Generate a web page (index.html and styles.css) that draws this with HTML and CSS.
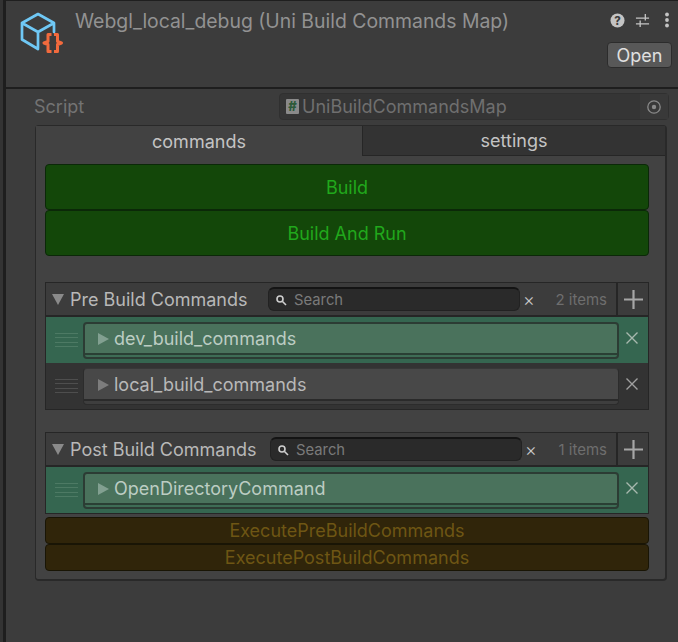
FILE: index.html
```html
<!DOCTYPE html>
<html lang="en">
<head>
  <meta charset="UTF-8">
  <title>Webgl_local_debug</title>
  <link rel="stylesheet" href="styles.css">
</head>
<body>
  <div class="side"></div>
  <div class="inspector">

    <!-- Header -->
    <header class="head">
      <svg class="logo" width="48" height="46" viewBox="0 0 48 46" fill="none">
        <path d="M20 22 L4 13 V29.500 L20 39 M20 22 L36 13 L20 4 L4 13 M36 13 V22 M20 22 V38" stroke="#6fc8f5" stroke-width="2.700" stroke-linejoin="round" stroke-linecap="round"/>
        <path d="M33.500 24.500 H30 V31.500 L26 33 L30 34.500 V41.500 H33.500 M36 24.500 H39.500 V31.500 L43.500 33 L39.500 34.500 V41.500 H36" stroke="#f26a3d" stroke-width="3" stroke-linejoin="round"/>
      </svg>
      <div class="head-title">Webgl_local_debug (Uni Build Commands Map)</div>
      <div class="head-right">
        <div class="head-icons">
          <svg width="15" height="15" viewBox="0 0 16 16"><circle cx="8" cy="8" r="7.500" fill="#c4c4c4"/><text x="8" y="12.500" class="help-mark">?</text></svg>
          <svg width="15" height="15" viewBox="0 0 16 16" stroke="#c4c4c4" stroke-width="1.400" fill="none"><path d="M1 5.500H15M1 11.500H15M11 1V8M5.500 8V15"/></svg>
          <svg class="dots" width="6" height="16" viewBox="0 0 6 16" fill="#c4c4c4"><circle cx="3" cy="2.500" r="1.900"/><circle cx="3" cy="8" r="1.900"/><circle cx="3" cy="13.500" r="1.900"/></svg>
        </div>
        <button class="open-btn">Open</button>
      </div>
    </header>

    <!-- Script -->
    <div class="script-row">
      <span class="script-label">Script</span>
      <div class="script-field">
        <span class="hash">#</span>
        <span class="script-name">UniBuildCommandsMap</span>
        <span class="picker"><svg width="16" height="16" viewBox="0 0 16 16" fill="none"><circle cx="8" cy="8" r="6.200" stroke="#8a8a8a" stroke-width="1.300"/><circle cx="8" cy="8" r="2.200" fill="#8a8a8a"/></svg></span>
      </div>
    </div>

    <!-- Panel -->
    <div class="panel">
      <div class="tabs">
        <div class="tab tab-on">commands</div>
        <div class="tab">settings</div>
      </div>
      <div class="panel-body">
        <button class="big-btn">Build</button>
        <button class="big-btn">Build And Run</button>

        <section class="list list-pre">
          <div class="list-head">
            <span class="fold"></span>
            <span class="list-title">Pre Build Commands</span>
            <div class="search"><svg width="12" height="12" viewBox="0 0 12 12" fill="none" stroke="#cfcfcf" stroke-width="1.600"><circle cx="5" cy="5" r="3"/><path d="M7.500 7.500L11 11"/></svg><span>Search</span></div>
            <span class="clear">×</span>
            <span class="count">2 items</span>
            <span class="add"><svg width="19" height="19" viewBox="0 0 19 19" stroke="#a6a6a6" stroke-width="2.200"><path d="M0 9.500H19M9.500 0V19"/></svg></span>
          </div>
          <div class="row row-on">
            <div class="grip"><i></i><i></i><i></i><i></i></div>
            <div class="item"><span class="item-arrow"></span>dev_build_commands</div>
            <svg class="del" width="12" height="12" viewBox="0 0 12 12" stroke="#a8b8ae" stroke-width="1.400"><path d="M0.500 0.500L11.500 11.500M11.500 0.500L0.500 11.500"/></svg>
          </div>
          <div class="row">
            <div class="grip"><i></i><i></i><i></i><i></i></div>
            <div class="item"><span class="item-arrow"></span>local_build_commands</div>
            <svg class="del" width="12" height="12" viewBox="0 0 12 12" stroke="#a0a0a0" stroke-width="1.400"><path d="M0.500 0.500L11.500 11.500M11.500 0.500L0.500 11.500"/></svg>
          </div>
        </section>

        <section class="list list-post">
          <div class="list-head">
            <span class="fold"></span>
            <span class="list-title">Post Build Commands</span>
            <div class="search"><svg width="12" height="12" viewBox="0 0 12 12" fill="none" stroke="#cfcfcf" stroke-width="1.600"><circle cx="5" cy="5" r="3"/><path d="M7.500 7.500L11 11"/></svg><span>Search</span></div>
            <span class="clear">×</span>
            <span class="count">1 items</span>
            <span class="add"><svg width="19" height="19" viewBox="0 0 19 19" stroke="#a6a6a6" stroke-width="2.200"><path d="M0 9.500H19M9.500 0V19"/></svg></span>
          </div>
          <div class="row row-on">
            <div class="grip"><i></i><i></i><i></i><i></i></div>
            <div class="item"><span class="item-arrow"></span>OpenDirectoryCommand</div>
            <svg class="del" width="12" height="12" viewBox="0 0 12 12" stroke="#a8b8ae" stroke-width="1.400"><path d="M0.500 0.500L11.500 11.500M11.500 0.500L0.500 11.500"/></svg>
          </div>
        </section>

        <button class="exec-btn exec-first">ExecutePreBuildCommands</button>
        <button class="exec-btn">ExecutePostBuildCommands</button>
      </div>
    </div>
  </div>
</body>
</html>
```

FILE: styles.css
```css
* {
  box-sizing: border-box;
}

html, body {
  height: 100%;
}

/* Page */
body {
  margin: 0;
  display: flex;
  background-color: #3c3c3c;
  font-family: 'Inter', 'Liberation Sans', sans-serif;
  color: #c4c4c4;
  overflow: hidden;
}

button {
  font-family: inherit;
}

.side {
  width: 6px;
  flex: none;
  background-color: #333333;
  border-right: 3px solid #1e1e1e;
}

.inspector {
  flex: 1;
  min-width: 0;
  border-top: 1px solid #1f1f1f;
}

/* Header */
.head {
  height: 88px;
  display: flex;
  align-items: flex-start;
  padding: 7px 6px 0 12px;
  border-bottom: 2px solid #1e1e1e;
}

.logo {
  flex: none;
  margin-top: 2px;
}

.head-title {
  margin-left: 9px;
  margin-top: 1px;
  font-size: 19.400px;
  color: #929292;
  white-space: nowrap;
  flex: 1;
}

.head-right {
  display: flex;
  flex-direction: column;
  align-items: flex-end;
  gap: 14px;
  margin-top: 4px;
}

.head-icons {
  display: flex;
  align-items: center;
  gap: 10px;
  padding-right: 2px;
}

.dots {
  margin-left: 4px;
}

.help-mark {
  font-size: 12px;
  font-weight: 800;
  fill: #3c3c3c;
  text-anchor: middle;
}

.open-btn {
  width: 65px;
  height: 26px;
  padding: 0;
  border: 1px solid #2c2c2c;
  border-radius: 4px;
  background-color: #585858;
  color: #e0e0e0;
  font-size: 18px;
}

/* Script row */
.script-row {
  display: flex;
  align-items: center;
  height: 27px;
  margin: 4px 9px 0 28px;
}

.script-label {
  width: 245px;
  font-size: 18px;
  color: #737373;
}

.script-field {
  flex: 1;
  height: 27px;
  display: flex;
  align-items: center;
  border: 1px solid #303030;
  border-radius: 4px;
  background-color: #353535;
  padding-left: 6px;
  color: #6f6f6f;
  font-size: 18px;
}

.hash {
  width: 13px;
  height: 15px;
  margin-right: 3px;
  background-color: #8a8a8a;
  color: #2d5a3a;
  font-size: 13px;
  font-weight: 800;
  line-height: 15px;
  text-align: center;
  border-radius: 1px;
}

.script-name {
  flex: 1;
}

.picker {
  width: 28px;
  height: 25px;
  display: flex;
  align-items: center;
  justify-content: center;
  background-color: #393939;
}

/* Panel with tabs */
.panel {
  margin: 5px 11px 0 29px;
  height: 456px;
  border: 2px solid #292929;
  border-top-width: 1px;
  border-left-width: 1px;
  border-radius: 4px;
  background-color: #424242;
}

.tabs {
  display: flex;
  height: 30px;
}

.tab {
  flex: 1;
  display: flex;
  align-items: center;
  justify-content: center;
  font-size: 18px;
  background-color: #333333;
  border-bottom: 1px solid #262626;
  border-left: 1px solid #262626;
}

.tab-on {
  flex: none;
  width: 326px;
  background-color: #424242;
  border: 0;
}

.panel-body {
  padding: 8px 16px 0 9px;
  display: flex;
  flex-direction: column;
}

.big-btn {
  height: 46px;
  padding: 0;
  border: 1px solid #0b2808;
  border-radius: 4px;
  background-color: #134709;
  color: #21a81c;
  font-size: 18px;
}

/* Lists */
.list {
  border: 1px solid #262626;
  background-color: #333333;
}

.list-pre {
  margin-top: 26px;
}

.list-post {
  margin-top: 22px;
}

.list-head {
  height: 34px;
  display: flex;
  align-items: center;
  padding-left: 6px;
  background-color: #3c3c3c;
  border-bottom: 2px solid #262626;
}

.fold {
  width: 0;
  height: 0;
  border-left: 6.500px solid transparent;
  border-right: 6.500px solid transparent;
  border-top: 11.500px solid #8a8a8a;
}

.list-title {
  margin-left: 6px;
  width: 198px;
  font-size: 18px;
  color: #b8b8b8;
  white-space: nowrap;
}

.list-post .list-title {
  width: 200px;
}

.search {
  width: 252px;
  height: 24px;
  display: flex;
  align-items: center;
  gap: 7px;
  padding-left: 6px;
  border-radius: 6px;
  background-color: #2a2a2a;
  border: 1px solid #222222;
  border-top: 2px solid #141414;
  font-size: 14.800px;
  color: #7a7a7a;
}

.clear {
  width: 18px;
  text-align: center;
  font-size: 18px;
  color: #c8c8c8;
  font-weight: 300;
}

.count {
  flex: 1;
  text-align: right;
  padding-right: 9px;
  font-size: 15px;
  color: #6e6e6e;
}

.add {
  width: 32px;
  height: 32px;
  display: flex;
  align-items: center;
  justify-content: center;
  border-left: 2px solid #262626;
}

.row {
  height: 46px;
  display: flex;
  align-items: center;
  background-color: #333333;
}

.row-on {
  background-color: #356650;
}

.grip {
  width: 37px;
  flex: none;
  display: flex;
  flex-direction: column;
  gap: 3.500px;
  padding: 0 5px 0 9px;
}

.grip i {
  display: block;
  height: 1px;
  background-color: #4e4e4e;
}

.row-on .grip i {
  background-color: #4d7a64;
}

.item {
  width: 536px;
  height: 37px;
  flex: none;
  display: flex;
  align-items: center;
  padding: 0 0 3px 14px;
  border: 1px solid #2c2c2c;
  border-top-color: #383838;
  border-radius: 4px;
  background: linear-gradient(to top, #3e3e3e 0, #3e3e3e 3px, #2a2a2a 3px, #2a2a2a 5px, #484848 5px);
  font-size: 18px;
  color: #b8b8b8;
}

.row-on .item {
  padding-left: 13px;
  border: 2px solid #2c3c34;
  background: linear-gradient(to top, #3e6c55 0, #3e6c55 2px, #2a3f34 2px, #2a3f34 4px, #4a725c 4px);
  color: #bccdc3;
}

.item-arrow {
  width: 0;
  height: 0;
  margin-right: 5px;
  border-top: 6.500px solid transparent;
  border-bottom: 6.500px solid transparent;
  border-left: 11px solid #7d7d7d;
}

.row-on .item-arrow {
  border-left-color: #82a091;
}

.del {
  margin-left: 7px;
  margin-bottom: 5px;
  flex: none;
}

/* Yellow buttons */
.exec-btn {
  height: 27px;
  padding: 0;
  border: 1px solid #191505;
  border-radius: 4px;
  background-color: #30250a;
  color: #6e5614;
  font-size: 18px;
}

.exec-first {
  margin-top: 3px;
}
```
